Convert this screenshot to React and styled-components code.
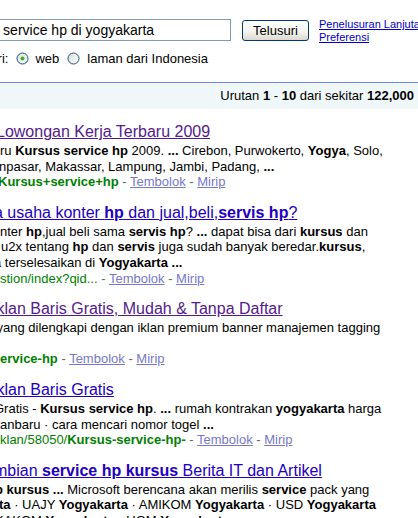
import styled, { createGlobalStyle } from 'styled-components'

const GlobalStyle = createGlobalStyle`
  body {
    margin: 0;
    background: #fff;
    color: #000;
    font-family: "Liberation Sans", Arial, sans-serif;
    overflow: hidden;
  }
`;

const Page = styled.div`
  width: 418px;
  height: 518px;
  overflow: hidden;
`;

/* search form, its left part is outside the window */
const Header = styled.div`
  display: flex;
  flex-direction: column;
  margin-left: -45px;
  padding-top: 19px;
`;

const SearchRow = styled.div`
  display: flex;
  align-items: flex-start;
`;

const SearchInput = styled.input`
  box-sizing: border-box;
  flex: none;
  width: 276px;
  height: 22px;
  margin: 0;
  padding: 0 2px;
  border: 1px solid #7f9db9;
  font-family: "Liberation Sans", Arial, sans-serif;
  font-size: 14px;
  color: #000;
  outline: none;
`;

const SearchButton = styled.button`
  box-sizing: border-box;
  flex: none;
  width: 67px;
  height: 21px;
  margin: 1px 0 0 11px;
  padding: 0;
  border: 1px solid #003c74;
  border-radius: 3px;
  background: linear-gradient(#ffffff, #f4f4f0 55%, #dcd8ce);
  font-family: "Liberation Sans", Arial, sans-serif;
  font-size: 13px;
  color: #000;
`;

const SideLinks = styled.div`
  display: flex;
  flex: none;
  flex-direction: column;
  margin: -1px 0 0 10px;
  font-size: 11px;
  line-height: 12.5px;
  white-space: nowrap;
`;

const SmallLink = styled.a`
  color: #0000cc;
  text-decoration: underline;
`;

const RadioRow = styled.div`
  display: flex;
  align-items: center;
  height: 16px;
  margin-top: 7px;
  padding-left: 5px;
  font-size: 13px;
  white-space: nowrap;
`;

const RadioBox = styled.svg`
  display: block;
  flex: none;
  margin-left: ${p => p.$gap}px;
`;

const RadioLabel = styled.span`
  margin-left: ${p => p.$gap}px;
`;

const SummaryBar = styled.div`
  display: flex;
  justify-content: flex-end;
  margin-top: 16px;
  padding-right: 4px;
  height: 26px;
  line-height: 26px;
  border-top: 1px solid #6b90da;
  background: #f0f7f9;
  font-size: 13px;
  white-space: nowrap;
`;

const Results = styled.div`
  margin-top: 11px;
`;

const Result = styled.div`
  margin-bottom: 11px;
`;

const Title = styled.div`
  font-size: 16px;
  line-height: 23px;
  white-space: nowrap;
  margin-left: ${p => -p.$cut}px;

  a {
    color: ${p => (p.$visited ? '#551a8b' : '#2200c1')};
    text-decoration: underline;
  }
`;

const Snippet = styled.div`
  font-size: 13px;
  line-height: 15.6px;
`;

const Line = styled.div`
  white-space: nowrap;
  margin-left: ${p => -(p.$cut || 0)}px;
`;

const Cite = styled.cite`
  font-style: normal;
  color: #008000;
`;

const Gl = styled.span`
  color: #666;
`;

const FootLink = styled.a`
  color: #7777cc;
  text-decoration: underline;
`;

function Radio({ id, checked, gap }) {
  return (
    <RadioBox $gap={gap} width="13" height="13" viewBox="0 0 13 13">
      <defs>
        <linearGradient id={id} x1="0" y1="0" x2="1" y2="1">
          <stop offset="0" stopColor="#dcdcd6" />
          <stop offset="1" stopColor="#ffffff" />
        </linearGradient>
      </defs>
      <circle cx="6.5" cy="6.5" r="5.5" fill={`url(#${id})`} stroke="#1c5180" />
      {checked && <circle cx="6.5" cy="6.5" r="2" fill="#36b336" />}
    </RadioBox>
  )
}

function Foot({ children }) {
  return (
    <Line>
      {children}
      <Gl>
        {' - '}
        <FootLink href="#">Tembolok</FootLink>
        {' - '}
        <FootLink href="#">Mirip</FootLink>
      </Gl>
    </Line>
  )
}

export default function App() {
  return (
    <Page>
      <GlobalStyle />

      <Header>
        <SearchRow>
          <SearchInput defaultValue="kursus service hp di yogyakarta" />
          <SearchButton>Telusuri</SearchButton>
          <SideLinks>
            <SmallLink href="#">Penelusuran Lanjutan</SmallLink>
            <SmallLink href="#">Preferensi</SmallLink>
          </SideLinks>
        </SearchRow>
        <RadioRow>
          <span>Telusuri:</span>
          <Radio id="r-web" checked gap={8} />
          <RadioLabel $gap={6}>web</RadioLabel>
          <Radio id="r-id" gap={8} />
          <RadioLabel $gap={7}>laman dari Indonesia</RadioLabel>
        </RadioRow>
      </Header>

      <SummaryBar>
        <span>
          Urutan <b>1</b> - <b>10</b> dari sekitar <b>122,000</b>
        </span>
      </SummaryBar>

      <Results>
        <Result>
          <Title $cut={4} $visited>
            <a href="#">Lowongan Kerja Terbaru 2009</a>
          </Title>
          <Snippet>
            <Line>ru <b>Kursus service hp</b> 2009. <b>...</b> Cirebon, Purwokerto, <b>Yogya</b>, Solo,</Line>
            <Line $cut={1}>npasar, Makassar, Lampung, Jambi, Padang, <b>...</b></Line>
            <Line $cut={2}>
              <Foot><Cite><b>Kursus+service+hp</b></Cite></Foot>
            </Line>
          </Snippet>
        </Result>

        <Result>
          <Title $cut={6}>
            <a href="#">a usaha konter <b>hp</b> dan jual,beli,<b>servis hp</b>?</a>
          </Title>
          <Snippet>
            <Line>nter <b>hp</b>,jual beli sama <b>servis hp</b>? <b>...</b> dapat bisa dari <b>kursus</b> dan</Line>
            <Line $cut={-1}>u2x tentang <b>hp</b> dan <b>servis</b> juga sudah banyak beredar.<b>kursus</b>,</Line>
            <Line $cut={6}>a terselesaikan di <b>Yogyakarta ...</b></Line>
            <Foot><Cite>stion/index?qid...</Cite></Foot>
          </Snippet>
        </Result>

        <Result>
          <Title $cut={3.5} $visited>
            <a href="#">klan Baris Gratis, Mudah &amp; Tanpa Daftar</a>
          </Title>
          <Snippet>
            <Line $cut={3.5}>yang dilengkapi dengan iklan premium banner manajemen tagging</Line>
            <Line>&nbsp;</Line>
            <Foot><Cite><b>ervice-hp</b></Cite></Foot>
          </Snippet>
        </Result>

        <Result>
          <Title $cut={3.5}>
            <a href="#">klan Baris Gratis</a>
          </Title>
          <Snippet>
            <Line $cut={6}>Gratis - <b>Kursus service hp</b>. <b>...</b> rumah kontrakan <b>yogyakarta</b> harga</Line>
            <Line>anbaru · cara mencari nomor togel <b>...</b></Line>
            <Foot><Cite>klan/58050/<b>Kursus-service-hp-</b></Cite></Foot>
          </Snippet>
        </Result>

        <Result>
          <Title $cut={6}>
            <a href="#">mbian <b>service hp kursus</b> Berita IT dan Artikel</a>
          </Title>
          <Snippet>
            <Line $cut={5}><b>p kursus ...</b> Microsoft berencana akan merilis <b>service</b> pack yang</Line>
            <Line $cut={1}><b>ta</b> · UAJY <b>Yogyakarta</b> · AMIKOM <b>Yogyakarta</b> · USD <b>Yogyakarta</b></Line>
            <Line $cut={5}>KAKOM <b>Yogyakarta</b> · UGM <b>Yogyakarta</b></Line>
          </Snippet>
        </Result>
      </Results>
    </Page>
  )
}
